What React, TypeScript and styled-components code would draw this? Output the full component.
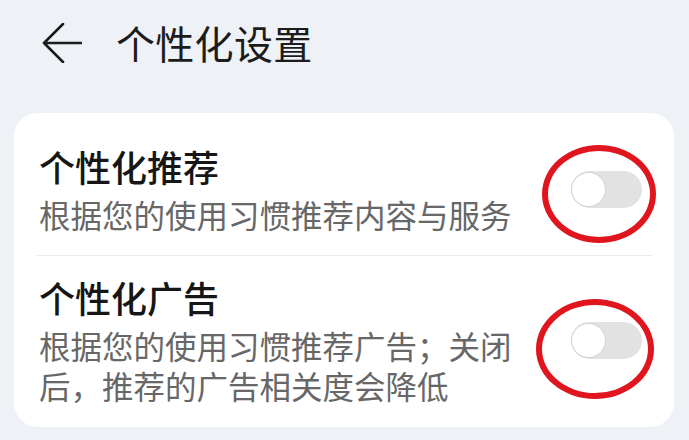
import React from "react";
import styled, { createGlobalStyle } from "styled-components";

const Global = createGlobalStyle`
  html, body { margin: 0; padding: 0; background: #eef1f5; }
  body {
    font-family: "Noto Sans CJK SC", "Noto Sans", sans-serif;
    -webkit-font-smoothing: antialiased;
  }
`;

const Page = styled.div`
  width: 689px;
  height: 440px;
  background: #eef1f5;
  padding: 0 15px 0 14px;
  box-sizing: border-box;
  overflow: hidden;
`;

const Header = styled.header`
  height: 84px;
  display: flex;
  align-items: center;
  padding-left: 28px;
  gap: 34px;
`;

const BackButton = styled.button`
  width: 40px;
  height: 40px;
  padding: 0;
  border: 0;
  background: transparent;
  display: flex;
  align-items: center;
  justify-content: center;
  margin-top: 1px;
`;

const Title = styled.h1`
  margin: 0;
  font-size: 39px;
  line-height: 48px;
  font-weight: 400;
  color: #1c1c1c;
  letter-spacing: 0.3px;
`;

const Card = styled.section`
  margin-top: 29px;
  background: #ffffff;
  border-radius: 24px;
  padding-top: 12px;
  display: flex;
  flex-direction: column;
`;

const Row = styled.div<{ $divider?: boolean }>`
  display: flex;
  align-items: center;
  justify-content: space-between;
  padding: 19px 32px 22px 25px;
  position: relative;
  ${(p) =>
    p.$divider &&
    `
    &::after {
      content: "";
      position: absolute;
      left: 23px;
      right: 22px;
      bottom: 0;
      height: 1px;
      background: #e9e9e9;
    }
  `}
`;

const TextBlock = styled.div`
  width: 482px;
  display: flex;
  flex-direction: column;
  gap: 6px;
`;

const ItemTitle = styled.div`
  font-size: 36px;
  line-height: 44px;
  color: #161616;
  font-weight: 500;
`;

const ItemDesc = styled.div`
  font-size: 31.5px;
  line-height: 40px;
  color: #676767;
`;

const SwitchWrap = styled.div<{ $ringX: number; $ringY: number; $rw: number; $rh: number }>`
  position: relative;
  width: 71px;
  height: 37px;
  flex: none;
  &::after {
    content: "";
    position: absolute;
    left: ${(p) => p.$ringX}px;
    top: ${(p) => p.$ringY}px;
    width: ${(p) => p.$rw}px;
    height: ${(p) => p.$rh}px;
    box-sizing: border-box;
    border: 6px solid #e0151d;
    border-radius: 50%;
    pointer-events: none;
  }
`;

const Track = styled.div`
  width: 71px;
  height: 37px;
  border-radius: 19px;
  background: #e2e2e2;
  display: flex;
  align-items: center;
  padding-left: 1px;
  box-sizing: border-box;
`;

const Thumb = styled.div`
  width: 33px;
  height: 33px;
  border-radius: 50%;
  background: #ffffff;
  box-shadow: 0 0 0 1px #d4d4d4;
`;

const Arrow = () => (
  <svg width="40" height="40" viewBox="0 0 40 40" fill="none">
    <path
      d="M39 20 H2 M21 1 L2 20 L21 39"
      stroke="#1c1c1c"
      strokeWidth="2.6"
      strokeLinecap="round"
      strokeLinejoin="round"
    />
  </svg>
);

type SwitchProps = { ringX: number; ringY: number; rw: number; rh: number };

const Toggle = ({ ringX, ringY, rw, rh }: SwitchProps) => (
  <SwitchWrap $ringX={ringX} $ringY={ringY} $rw={rw} $rh={rh}>
    <Track>
      <Thumb />
    </Track>
  </SwitchWrap>
);

export default function App() {
  return (
    <>
      <Global />
      <Page>
        <Header>
          <BackButton aria-label="返回">
            <Arrow />
          </BackButton>
          <Title>个性化设置</Title>
        </Header>
        <Card>
          <Row $divider>
            <TextBlock>
              <ItemTitle>个性化推荐</ItemTitle>
              <ItemDesc>根据您的使用习惯推荐内容与服务</ItemDesc>
            </TextBlock>
            <Toggle ringX={-29} ringY={-26} rw={114} rh={98} />
          </Row>
          <Row>
            <TextBlock>
              <ItemTitle>个性化广告</ItemTitle>
              <ItemDesc>根据您的使用习惯推荐广告；关闭后，推荐的广告相关度会降低</ItemDesc>
            </TextBlock>
            <Toggle ringX={-35} ringY={-23} rw={118} rh={100} />
          </Row>
        </Card>
      </Page>
    </>
  );
}
